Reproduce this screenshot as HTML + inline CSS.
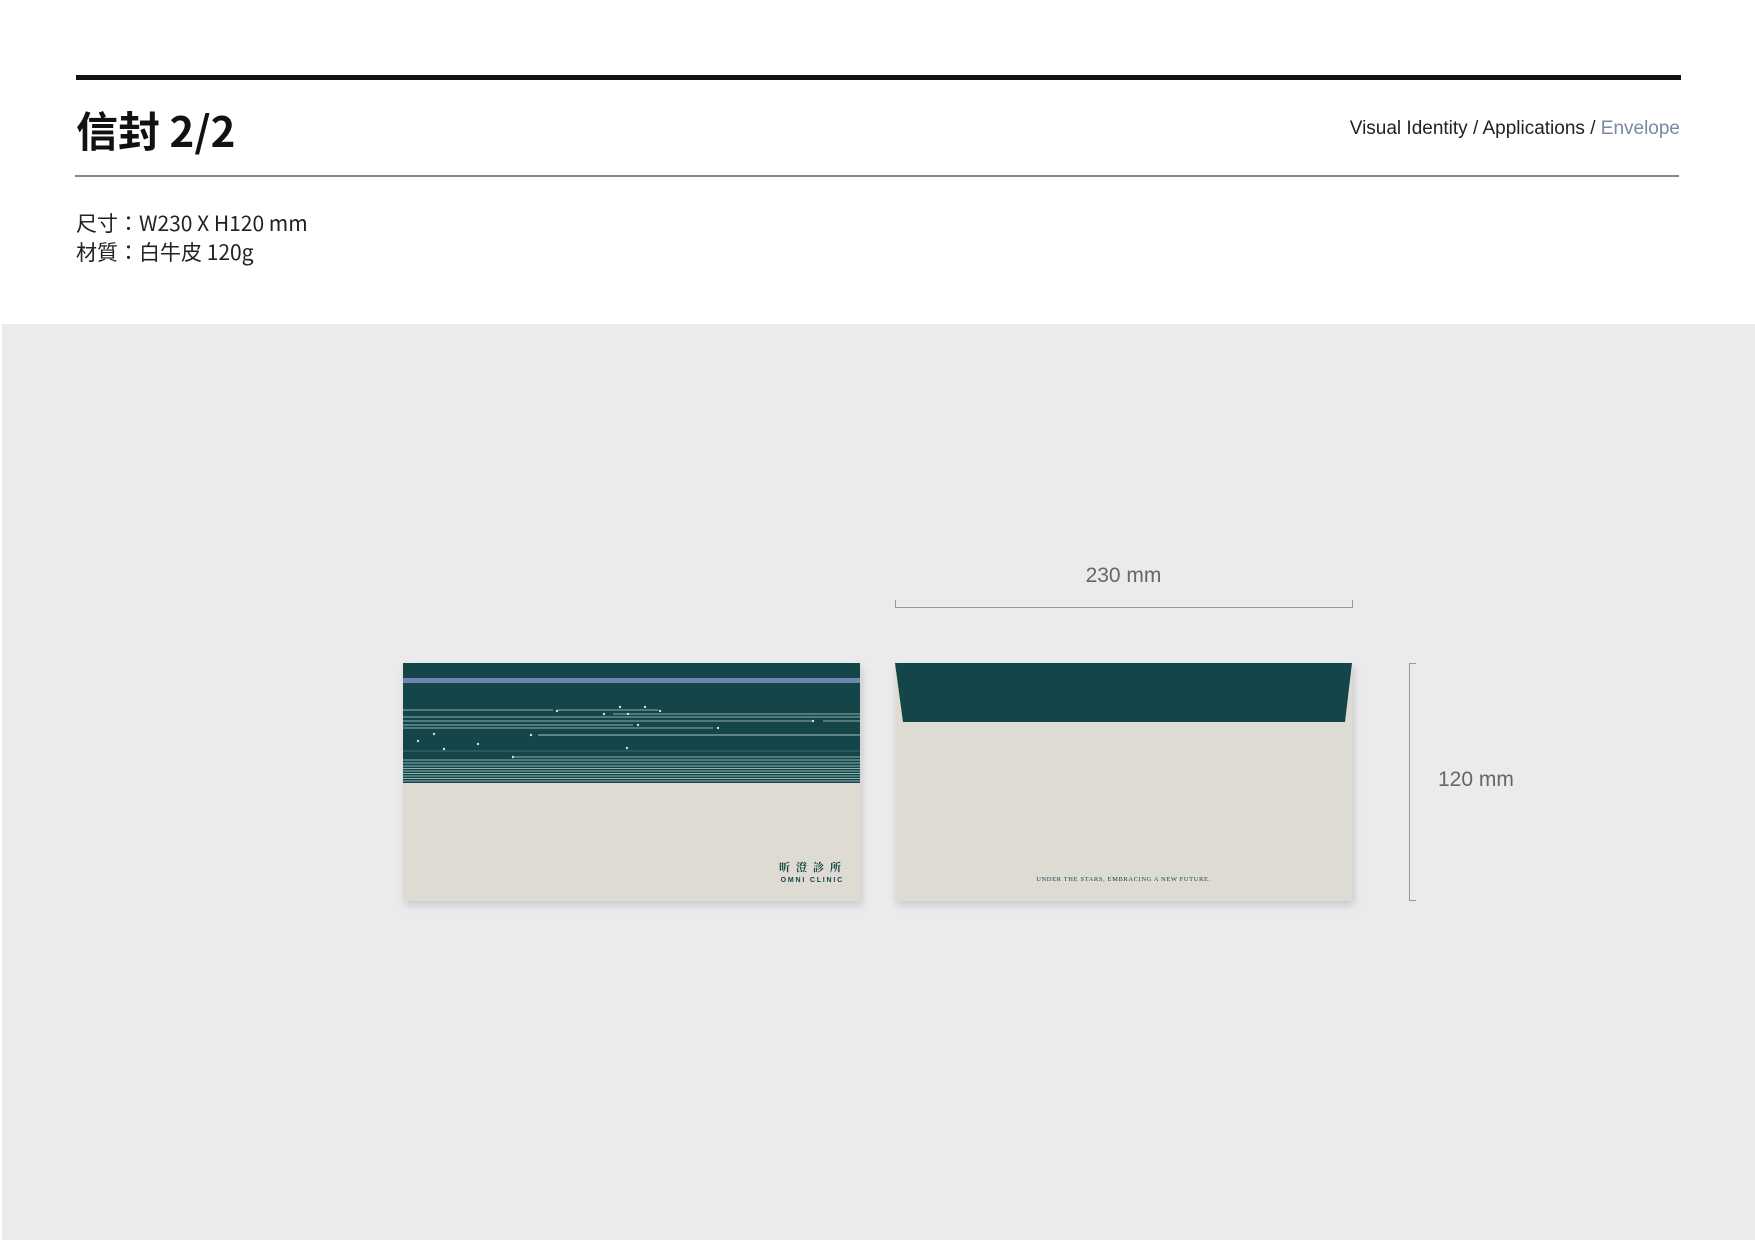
<!DOCTYPE html>
<html><head><meta charset="utf-8"><style>
*{margin:0;padding:0;box-sizing:border-box}
body{width:1755px;height:1241px;background:#fff;position:relative;overflow:hidden;font-family:"Liberation Sans","Noto Sans CJK TC",sans-serif}
.abs{position:absolute}
</style></head><body>
<div class="abs" style="left:76px;top:75px;width:1605px;height:5px;background:#111"></div>
<div class="abs" style="left:76px;top:102px;font-size:42px;font-weight:bold;color:#111;line-height:56px;font-family:'Noto Sans CJK TC',sans-serif">信封 2/2</div>
<div class="abs" style="right:75px;top:118px;font-size:19px;color:#222;white-space:nowrap">Visual Identity / Applications / <span style="color:#7b87a8">Envelope</span></div>
<div class="abs" style="left:75px;top:175px;width:1604px;height:2px;background:#888"></div>
<div class="abs" style="left:76px;top:209px;font-size:21px;line-height:29px;color:#222;font-family:'Noto Sans CJK TC',sans-serif">尺寸：W230 X H120 mm<br>材質：白牛皮 120g</div>
<div class="abs" style="left:2px;top:324px;width:1753px;height:916px;background:#ebebed"></div>

<!-- envelope front -->
<div class="abs" style="left:403px;top:663px;width:457px;height:238px;background:#dedbd3;box-shadow:2px 4px 8px rgba(0,0,0,0.15);overflow:hidden">
<svg width="457" height="120" style="position:absolute;left:0;top:0">
<rect width="457" height="120" fill="#134549"/>
<rect y="15" width="457" height="5" fill="#6f86b3"/>
<g stroke="#8fb0ad" stroke-width="1">
<line x1="0" y1="47" x2="150" y2="47"/><line x1="155" y1="47" x2="255" y2="47"/>
<line x1="210" y1="51" x2="457" y2="51"/><line x1="0" y1="54" x2="457" y2="54"/>
<line x1="0" y1="58" x2="410" y2="58"/><line x1="420" y1="58" x2="457" y2="58"/>
<line x1="0" y1="62" x2="230" y2="62"/><line x1="0" y1="65" x2="310" y2="65"/>
<line x1="135" y1="72" x2="457" y2="72" stroke="#5e8582" stroke-width="2"/>
<line x1="0" y1="88" x2="457" y2="88" stroke="#3f6b6b"/>
<line x1="110" y1="94" x2="457" y2="94"/>
<line x1="0" y1="97" x2="457" y2="97"/><line x1="0" y1="100" x2="457" y2="100"/>
<line x1="0" y1="103" x2="457" y2="103"/><line x1="0" y1="105.5" x2="457" y2="105.5"/>
<line x1="0" y1="108" x2="457" y2="108"/><line x1="0" y1="110.5" x2="457" y2="110.5"/>
<line x1="0" y1="113" x2="457" y2="113"/><line x1="0" y1="115.5" x2="457" y2="115.5"/>
<line x1="0" y1="118" x2="457" y2="118"/>
</g>
<g fill="#cfe3e0"><circle cx="154" cy="48" r="1.2"/><circle cx="217" cy="44" r="1.2"/><circle cx="242" cy="44" r="1.2"/><circle cx="257" cy="48" r="1.2"/><circle cx="201" cy="51" r="1.2"/><circle cx="225" cy="51" r="1.2"/><circle cx="235" cy="62" r="1.2"/><circle cx="315" cy="65" r="1.2"/><circle cx="410" cy="58" r="1.2"/><circle cx="31" cy="71" r="1.2"/><circle cx="15" cy="78" r="1.2"/><circle cx="41" cy="86" r="1.2"/><circle cx="75" cy="81" r="1.2"/><circle cx="128" cy="72" r="1.2"/><circle cx="224" cy="85" r="1.2"/><circle cx="110" cy="94" r="1.2"/></g>
</svg>
<div class="abs" style="right:13px;top:196px;font-size:11px;letter-spacing:6px;color:#134549;font-weight:bold;font-family:'Noto Serif CJK SC',serif">昕澄診所</div>
<div class="abs" style="right:16px;top:214px;font-size:7px;letter-spacing:1.8px;color:#134549;font-weight:bold">OMNI CLINIC</div>
</div>

<!-- envelope back -->
<div class="abs" style="left:895px;top:663px;width:457px;height:238px;background:#dedbd3;box-shadow:2px 4px 8px rgba(0,0,0,0.15)">
<svg width="457" height="60" style="position:absolute;left:0;top:0"><polygon points="0,0 457,0 450,59 8,59" fill="#134549"/></svg>
<div class="abs" style="left:0;width:457px;top:213px;text-align:center;font-size:6.5px;letter-spacing:0.6px;color:#134549;font-family:'Liberation Serif',serif">UNDER THE STARS, EMBRACING A NEW FUTURE.</div>
</div>

<!-- dimensions -->
<div class="abs" style="left:895px;width:457px;top:564px;text-align:center;font-size:21px;color:#666">230 mm</div>
<div class="abs" style="left:895px;top:600px;width:458px;height:8px;border:1px solid #999;border-top:none"></div>
<div class="abs" style="left:1409px;top:663px;width:7px;height:238px;border:1px solid #999;border-right:none"></div>
<div class="abs" style="left:1438px;top:768px;font-size:21px;color:#666">120 mm</div>
</body></html>
